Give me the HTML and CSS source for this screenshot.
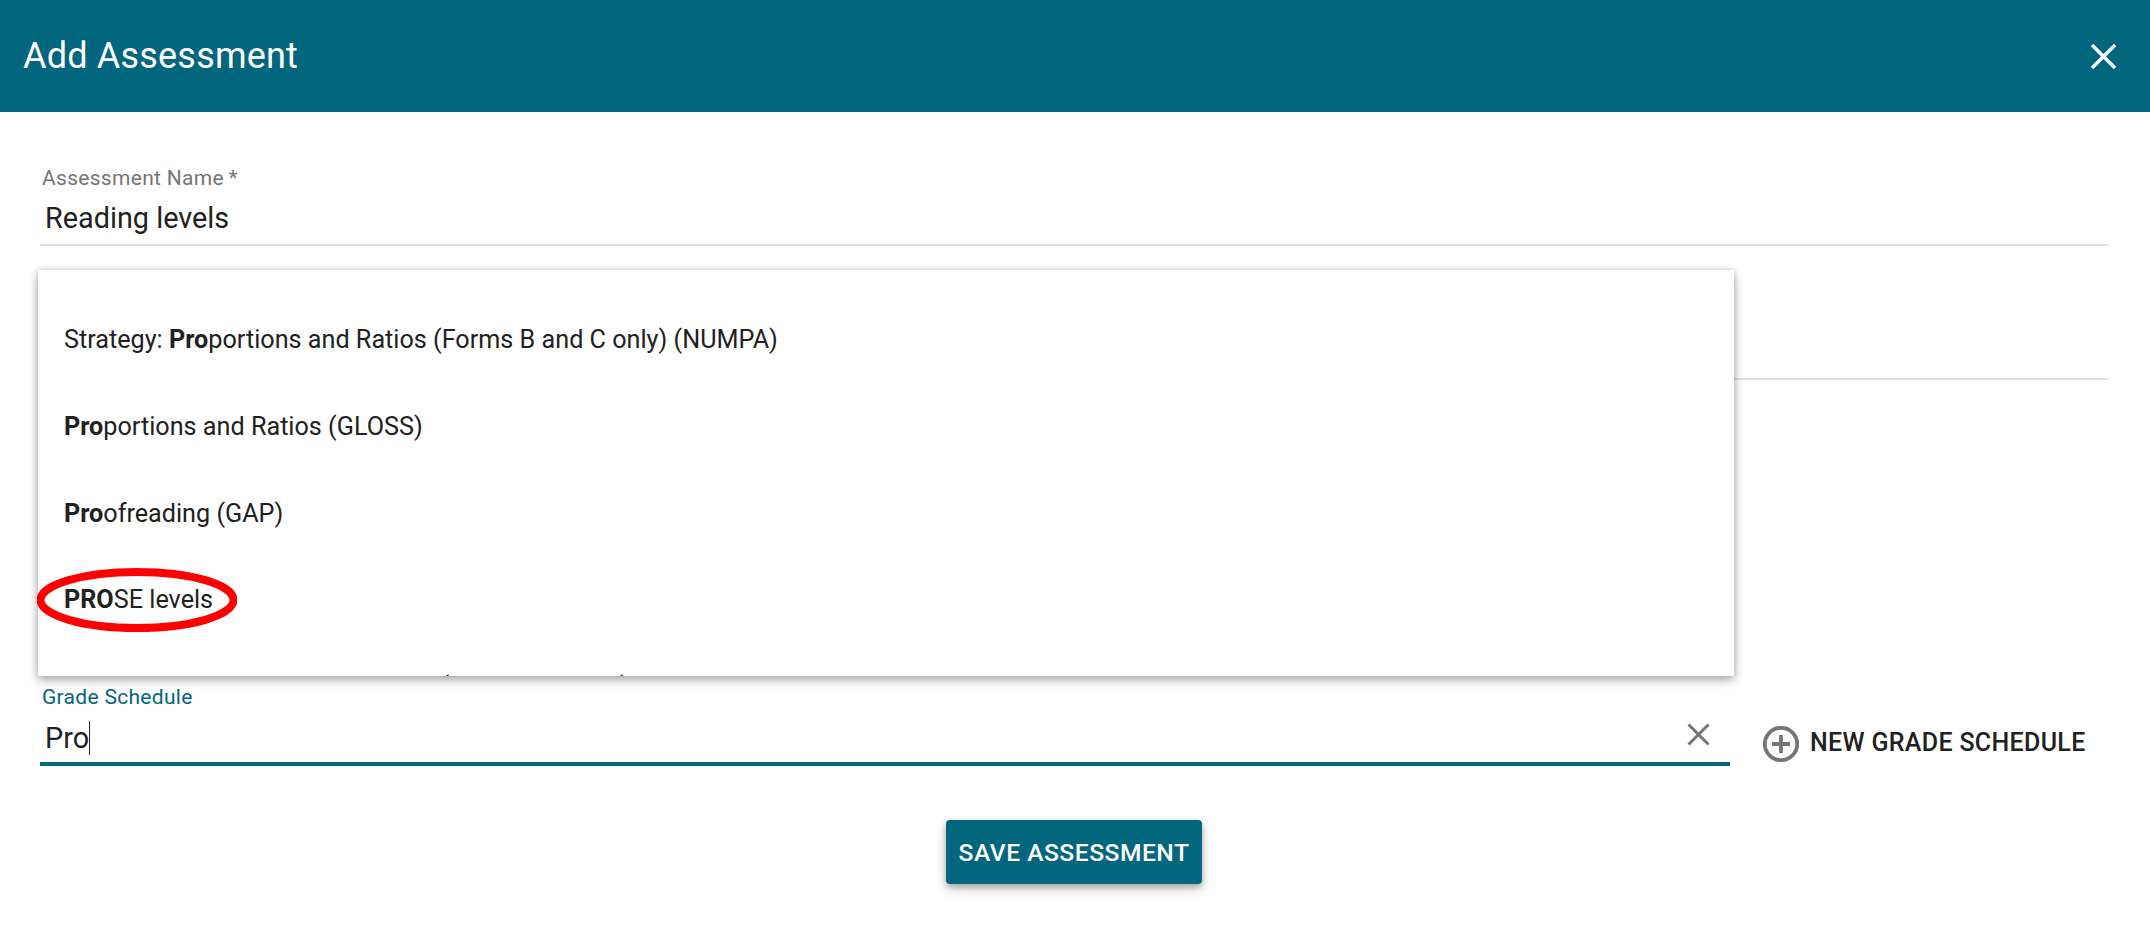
FILE: index.html
```html
<!DOCTYPE html>
<html lang="en">
<head>
<meta charset="utf-8">
<title>Add Assessment</title>
<link rel="stylesheet" href="styles.css">
</head>
<body>
<header class="appbar">
  <h1 class="appbar-title">Add Assessment</h1>
  <svg class="close-icon" viewBox="0 0 25 25" aria-hidden="true"><path d="M1 1 24 24M24 1 1 24"/></svg>
</header>
<main class="form">
  <div class="field field-name">
    <label class="label">Assessment Name&thinsp;*</label>
    <div class="value">Reading levels</div>
  </div>
  <div class="field field-blank"></div>
  <div class="schedule-row">
    <div class="field field-grade">
      <label class="label label-active">Grade Schedule</label>
      <div class="value"><span class="caret-text">Pro</span></div>
      <svg class="clear-icon" viewBox="0 0 23 23" aria-hidden="true"><path d="M1.5 1.5 21.5 21.5M21.5 1.5 1.5 21.5"/></svg>
    </div>
    <button class="new-btn">
      <svg class="plus-icon" viewBox="0 0 36 36" aria-hidden="true"><circle cx="18" cy="18" r="16.2"/><path d="M18 9V27M9 18H27"/></svg>
      <span class="new-btn-text">NEW GRADE SCHEDULE</span>
    </button>
  </div>
  <div class="actions"><button class="save-btn">SAVE ASSESSMENT</button></div>
</main>
<ul class="menu">
  <li class="item">Strategy: <b>Pro</b>portions and Ratios (Forms B and C only) (NUMPA)</li>
  <li class="item"><b>Pro</b>portions and Ratios (GLOSS)</li>
  <li class="item"><b>Pro</b>ofreading (GAP)</li>
  <li class="item"><b>PRO</b>SE levels</li>
  <li class="item"><b>Pro</b>gress in Reading Assessment (PM Benchmark)</li>
</ul>
<svg class="circle" viewBox="0 0 200 64" aria-hidden="true"><ellipse cx="100" cy="32" rx="96.5" ry="28"/></svg>
</body>
</html>
```
FILE: styles.css
```css
* { box-sizing: border-box; }
html, body { margin: 0; height: 100%; background: #fff; overflow: hidden; }
body { font-family: Roboto, "Liberation Sans", sans-serif; color: #212121; }
.appbar { height: 112px; background: #01667e; display: flex; align-items: center; justify-content: space-between; padding: 0 34px 0 23px; }
.appbar-title { margin: 0; font-size: 36px; font-weight: 400; color: #fff; letter-spacing: 0.2px; }
.close-icon { width: 25px; height: 25px; fill: none; stroke: #fff; stroke-width: 3.4; }
.form { padding: 0 42px 0 40px; }
.field { position: relative; border-bottom: 2px solid #e0e0e0; }
.field-name { margin-top: 52px; height: 82px; padding: 2px 0 0 2px; }
.field-blank { height: 134px; }
.label { display: block; font-size: 21px; line-height: 24px; color: #757575; letter-spacing: 0.3px; }
.label-active { color: #01667e; }
.value { font-size: 28.8px; line-height: 36px; margin-top: 10px; padding-left: 3px; }
.field-grade .value { margin-top: 11px; }
.caret-text { border-right: 1.5px solid #212121; }
.schedule-row { display: flex; align-items: flex-end; padding-top: 300px; }
.field-grade { width: 1690px; height: 86px; padding: 5px 0 0 2px; border-bottom: 4px solid #01667e; }
.clear-icon { position: absolute; top: 43px; left: 1647px; width: 23px; height: 23px; fill: none; stroke: #757575; stroke-width: 3; }
.new-btn { display: flex; align-items: center; gap: 11px; margin: 0 0 4px 33px; padding: 0; border: 0; background: none; font: 500 25px Roboto, sans-serif; color: #212121; letter-spacing: 0.33px; }
.new-btn-text { margin-bottom: 3px; }
.plus-icon { width: 36px; height: 36px; fill: none; stroke: #757575; stroke-width: 3.8; }
.actions { display: flex; justify-content: center; margin-top: 54px; }
.save-btn { width: 256px; height: 64px; border: 0; border-radius: 4px; background: #01667e; color: #fff; font: 500 24.6px Roboto, sans-serif; letter-spacing: 0.5px; box-shadow: 0 3px 6px rgba(0,0,0,.28), 0 6px 14px rgba(0,0,0,.14); }
.menu { position: absolute; left: 38px; top: 270px; width: 1696px; height: 406px; margin: 0; padding: 27px 0 0; list-style: none; background: #fff; overflow: hidden; box-shadow: 0 4px 10px rgba(0,0,0,.32), 0 0 6px rgba(0,0,0,.12); }
.item { height: 86.8px; padding-left: 26px; font-size: 25.2px; line-height: 86px; white-space: nowrap; }
.item b { font-weight: 700; }
.circle { position: absolute; left: 37px; top: 568px; width: 200px; height: 64px; fill: none; stroke: #f00; stroke-width: 8; }
```
